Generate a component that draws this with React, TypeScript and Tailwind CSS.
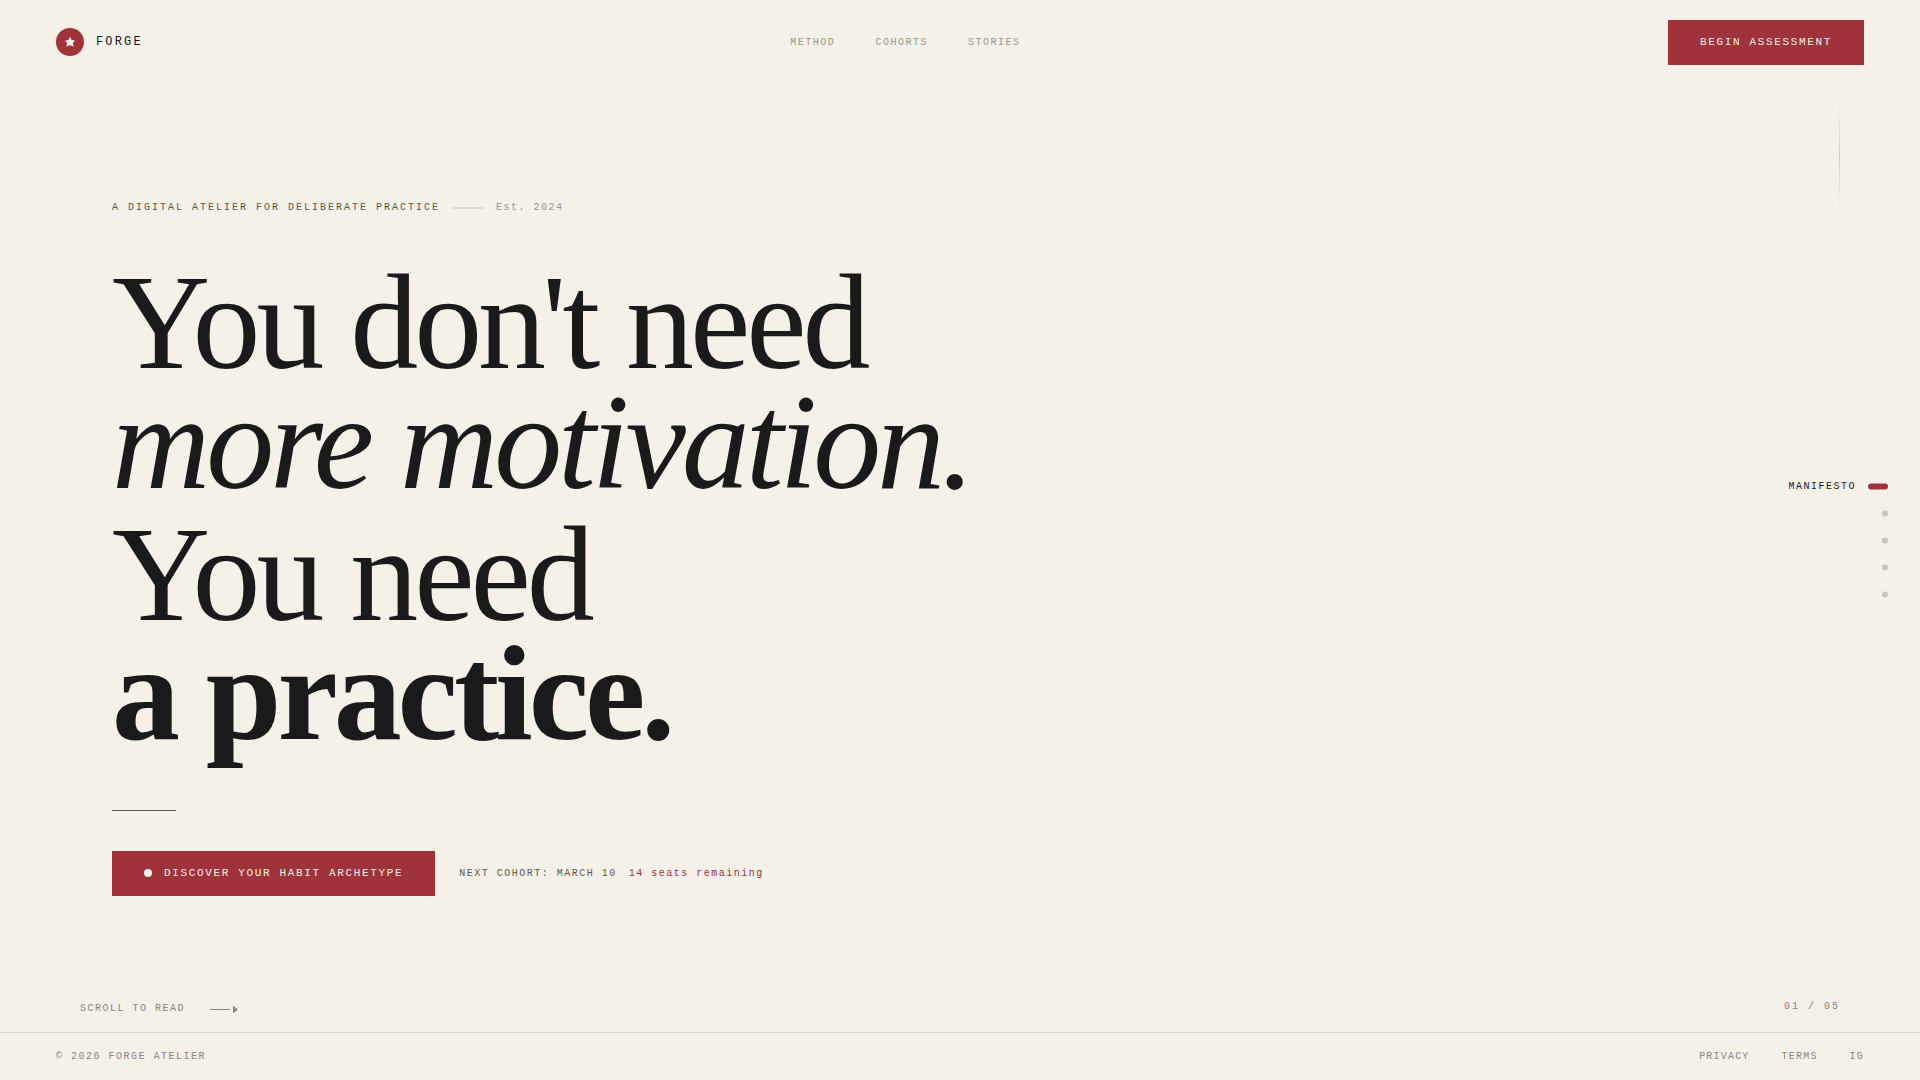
import type { ReactNode } from 'react'

const navLinks = ['Method', 'Cohorts', 'Stories']
const footerLinks = ['Privacy', 'Terms', 'IG']
const sections = ['Manifesto', 'Method', 'Cohorts', 'Stories', 'Begin']

function RedButton({ children }: { children: ReactNode }) {
  return (
    <button
      type="button"
      className="flex items-center gap-3 bg-[#a0323c] px-8 py-4 text-[11px] leading-[13px] tracking-[0.15em] uppercase text-[#f5f0e8] hover:bg-[#8a2a33]"
    >
      {children}
    </button>
  )
}

function Header() {
  return (
    <header className="flex items-center justify-between px-14 py-5">
      <a href="#manifesto" className="flex items-center gap-3 pb-px">
        <span className="flex size-7 items-center justify-center rounded-full bg-[#a0323c]">
          <svg viewBox="0 0 12 12" className="size-3 fill-[#f5f0e8]" aria-hidden="true">
            <path d="M6 0.800L7.600 3.900 11 4.400 8.900 6.900 9.700 10.600 6 9.200 2.300 10.600 3.100 6.900 1 4.400 4.400 3.900z" />
          </svg>
        </span>
        <span className="text-xs tracking-[0.18em] text-[#1a1a1a]">FORGE</span>
      </a>
      <nav className="flex gap-10 text-[10px] leading-[15px] tracking-[0.15em] uppercase text-[#9a958c]">
        {navLinks.map(link => (
          <a key={link} href={`#${link.toLowerCase()}`} className="hover:text-[#1a1a1a]">
            {link}
          </a>
        ))}
      </nav>
      <RedButton>Begin assessment</RedButton>
    </header>
  )
}

function Hero() {
  return (
    <section className="px-28 pt-[115px]">
      <div className="flex items-center gap-3 text-[10px] leading-[15px]">
        <span className="tracking-[0.2em] uppercase text-[#5c5852]">
          A digital atelier for deliberate practice
        </span>
        <span className="h-0.5 w-8 bg-[#e0dbd3]" />
        <span className="tracking-[0.15em] text-[#9a958c]">Est. 2024</span>
      </div>

      <h1 className="mt-[51px] font-['Liberation_Serif',serif] text-[136px] leading-[112px] tracking-[-0.03em] text-[#1a1a1a]">
        <span className="block">You don't need</span>
        <em className="mt-2 block">more motivation.</em>
        <span className="mt-5 block">You need</span>
        <strong className="mt-[7px] block font-bold">a practice.</strong>
      </h1>

      <div className="mt-[61px] h-px w-16 bg-[#5c5852]" />

      <div className="mt-10 flex items-center gap-6">
        <RedButton>
          <span className="mb-0.5 size-2 rounded-full bg-[#f5f0e8]" />
          Discover your habit archetype
        </RedButton>
        <p className="flex gap-3 text-[10px] leading-[15px] tracking-[0.15em]">
          <span className="uppercase text-[#5c5852]">Next cohort: March 10</span>
          <span className="text-[#a0323c]">14 seats remaining</span>
        </p>
      </div>
    </section>
  )
}

function SectionDots() {
  return (
    <nav
      aria-label="Sections"
      className="absolute top-1/2 right-8 flex -translate-y-1/2 flex-col items-end gap-4 text-[10px] leading-[11px] tracking-[0.15em] uppercase"
    >
      {sections.map((name, i) =>
        i === 0 ? (
          <a key={name} href="#manifesto" className="flex items-center gap-3 text-[#1a1a1a]">
            {name}
            <span className="h-1.5 w-5 rounded-full bg-[#a0323c]" />
          </a>
        ) : (
          <a key={name} href={`#${name.toLowerCase()}`} aria-label={name} className="flex h-[11px] items-center">
            <span className="size-1.5 rounded-full bg-[#c8c3bb]" />
          </a>
        )
      )}
    </nav>
  )
}

export default function App() {
  return (
    <div className="relative flex min-h-screen flex-col bg-[#f5f0e8] font-['Liberation_Mono',monospace]">
      <Header />

      <main className="flex flex-1 flex-col">
        <Hero />
        <div className="mt-auto flex items-start justify-between px-20 pt-6 pb-3.5 text-[10px] text-[#8a857d]">
          <div className="flex items-center gap-6 leading-[19px] tracking-[0.15em] uppercase">
            Scroll to read
            <svg viewBox="0 0 30 8" className="h-2 w-[30px]" aria-hidden="true">
              <path d="M1 4.500h20" stroke="currentColor" />
              <path d="M24 0.500v8l5-4z" fill="currentColor" />
            </svg>
          </div>
          <span className="leading-[15px] tracking-[0.2em]">01 / 05</span>
        </div>
      </main>

      <footer className="flex items-center justify-between border-t border-[#ddd8d0] px-14 py-4 text-[10px] leading-[15px] text-[#8a857d]">
        <span className="tracking-[0.15em] uppercase">© 2026 Forge Atelier</span>
        <nav className="flex gap-8 tracking-[0.12em] uppercase">
          {footerLinks.map(link => (
            <a key={link} href={`#${link.toLowerCase()}`} className="hover:text-[#1a1a1a]">
              {link}
            </a>
          ))}
        </nav>
      </footer>

      <div className="absolute top-[104px] right-20 h-[104px] w-px bg-linear-to-b from-transparent via-[#d0cbc3] to-transparent" />
      <SectionDots />
    </div>
  )
}
